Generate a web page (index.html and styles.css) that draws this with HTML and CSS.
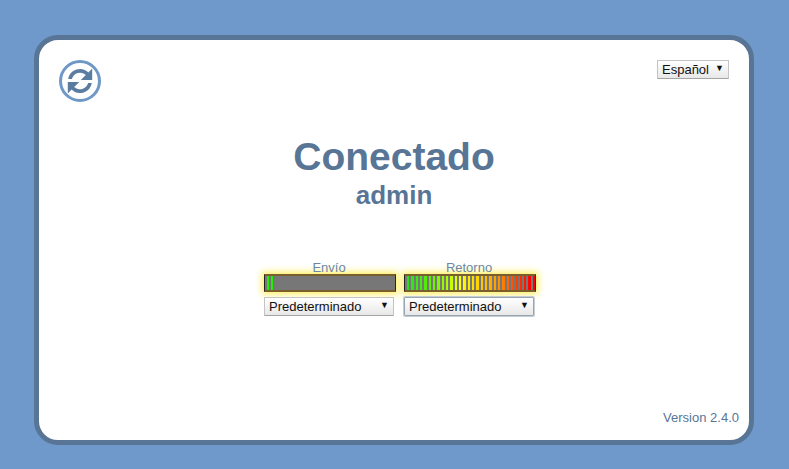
FILE: index.html
```html
<!DOCTYPE html>
<html lang="es">
<head>
    <meta charset="UTF-8">
    <title>Conectado</title>
    <link rel="stylesheet" href="styles.css">
</head>
<body>
<section class="card">
    <div class="top">
        <svg class="refresh" width="42" height="42" viewBox="0 0 42 42">
            <circle cx="21" cy="21" r="19.500" fill="#fff" stroke="#6f98c6" stroke-width="3"/>
            <path d="M9.200 19A12 12 0 0 1 29.400 12.400L33.200 8.600V20H21.800L26.800 15A8.400 8.400 0 0 0 12.900 19Z" fill="#5b7ca1"/>
            <path d="M32.800 23A12 12 0 0 1 12.600 29.600L8.800 33.400V22H20.200L15.200 27A8.400 8.400 0 0 0 29.100 23Z" fill="#5b7ca1"/>
        </svg>
        <div class="pick pick-lang">
            <select>
                <option>Español</option>
            </select>
        </div>
    </div>
    <h1>Conectado</h1>
    <h2>admin</h2>
    <div class="meters">
        <div class="meter">
            <span class="label">Envío</span>
            <div class="bar bar-low"></div>
            <div class="pick">
                <select>
                    <option>Predeterminado</option>
                </select>
            </div>
        </div>
        <div class="meter">
            <span class="label">Retorno</span>
            <div class="bar"></div>
            <div class="pick pick-focus">
                <select>
                    <option>Predeterminado</option>
                </select>
            </div>
        </div>
    </div>
    <p class="version">Version 2.4.0</p>
</section>
</body>
</html>
```

FILE: styles.css
```css
body, h1, h2, p {
    margin: 0; padding: 0;
}
body {
    height: 469px;
    overflow: hidden;
    background: #6f98cb;
    font-family: "Liberation Sans", Arial, sans-serif;
    color: #587596;
    padding: 35px 0 0 34px;
    box-sizing: border-box;
}
.card {
    width: 720px;
    height: 410px;
    box-sizing: border-box;
    background: #fff;
    border: 5px solid #587596;
    border-radius: 24px;
    display: flex;
    flex-direction: column;
    align-items: center;
    padding: 20px 10px 15px;
}
.top {
    align-self: stretch;
    display: flex;
    justify-content: space-between;
    align-items: flex-start;
    height: 42px;
    padding: 0 10px;
}
.refresh {
    display: block;
}
h1 {
    font-size: 39px;
    line-height: 46px;
    margin-top: 32px;
}
h2 {
    font-size: 26px;
    line-height: 31px;
    margin-top: 0;
}
.meters {
    display: flex;
    gap: 8px;
    margin-top: 49px;
    margin-left: 12px;
}
.meter {
    width: 132px;
    display: flex;
    flex-direction: column;
    align-items: flex-start;
}
.label {
    position: relative;
    z-index: 1;
    align-self: center;
    left: -1px;
    font-size: 13px;
    line-height: 15px;
    height: 14px;
    color: #6c87a5;
}
.bar {
    width: 132px;
    height: 18px;
    box-sizing: border-box;
    border-style: solid;
    border-color: #7a5f2a #222;
    border-width: 2px 1px;
    box-shadow: 0 0 7px 2px #ffee55;
    background:
        repeating-linear-gradient(90deg, #777 0 2px, transparent 2px 4.33px),
        linear-gradient(90deg, #20e020 0%, #60f000 20%, #c8ff00 36%, #ffff00 43%, #ffa000 70%, #ff0000 96%);
}
.bar-low {
    background:
        repeating-linear-gradient(90deg, #777 0 2px, transparent 2px 4.33px),
        linear-gradient(90deg, #20f000 0 8px, #777 8px);
}
.pick {
    position: relative;
    margin-top: 5px;
}
.pick::after {
    content: "▼";
    position: absolute;
    top: 1px;
    right: 5px;
    font-size: 9px;
    line-height: 14px;
    color: #111;
    pointer-events: none;
}
select {
    appearance: none;
    display: block;
    width: 130px;
    height: 19px;
    padding: 0 0 0 4px;
    border: 1px solid #c4c4c4;
    border-bottom-color: #a4a4a4;
    border-radius: 1px;
    background: linear-gradient(#fff, #e8e8e8);
    font-family: "Liberation Sans", Arial, sans-serif;
    font-size: 13px;
    color: #111;
}
.pick-focus select {
    border-color: #98a6b3;
    box-shadow: 0 0 0 1px #c5ccd3;
}
.pick-lang {
    margin-top: 0;
}
.pick-lang select {
    width: 72px;
}
.version {
    margin-top: auto;
    align-self: flex-end;
    font-size: 13px;
    line-height: 15px;
}
```
